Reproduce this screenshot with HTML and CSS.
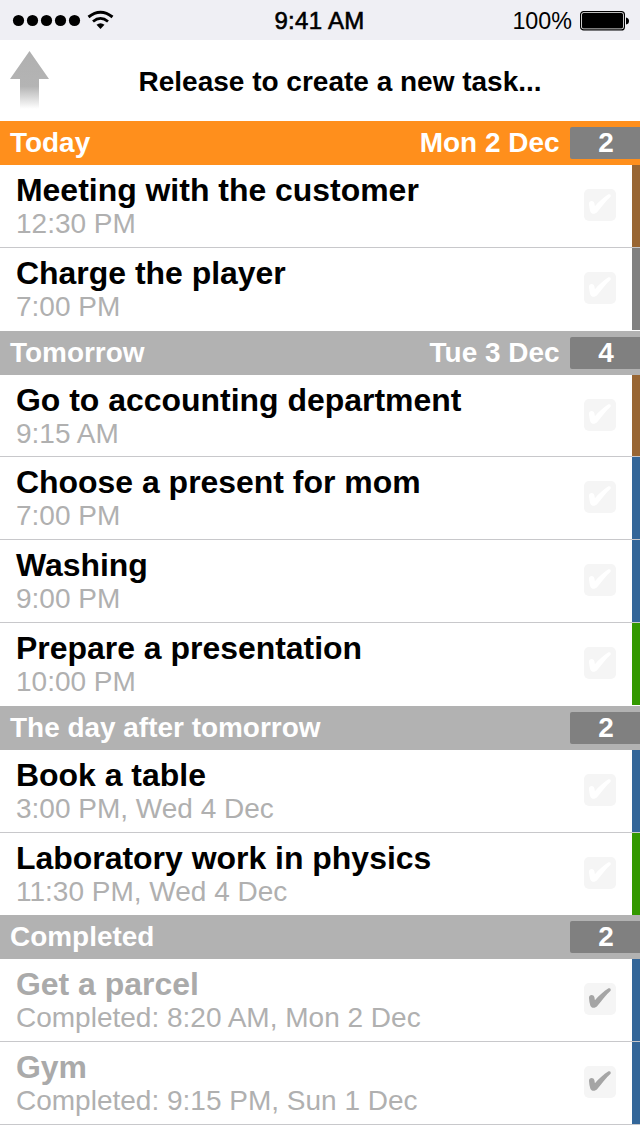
FILE: index.html
```html
<!DOCTYPE html>
<html lang="en">
<head>
<meta charset="utf-8">
<title>Tasks</title>
<link rel="stylesheet" href="styles.css">
</head>
<body>
<svg class="defs" width="0" height="0" aria-hidden="true">
  <symbol id="check" viewBox="0 0 32 32"><path d="M5 15C4.600 11.500 9.600 11 10.400 14.200L10.900 17.200C15 12.500 19.500 8.500 24.500 5.300Q27.300 4.500 26.600 7.800C22 12 18 17.500 13.500 22.800C11 25.600 7.500 25.600 6.300 22.500Q5.200 19 5 15Z"/></symbol>
</svg>
<header class="status">
  <div class="signal">
    <svg width="102" height="28" viewBox="0 0 102 28">
      <g><circle cx="6.500" cy="14.500" r="5.600"/><circle cx="20.500" cy="14.500" r="5.600"/><circle cx="34.500" cy="14.500" r="5.600"/><circle cx="48.500" cy="14.500" r="5.600"/><circle cx="62.500" cy="14.500" r="5.600"/></g>
      <g fill="none" stroke="#000"><path stroke-width="2.900" d="M76.500 11Q88.500 1.300 100.500 11"/><path stroke-width="2.800" d="M81 15.500Q88.500 9.300 96 15.500"/></g>
      <path d="M84.500 18.700Q88.500 15.600 92.500 18.700L88.500 23Z"/>
    </svg>
  </div>
  <div class="clock">9:41 AM</div>
  <div class="power"><span class="percent">100%</span>
    <svg width="50" height="20" viewBox="0 0 50 20"><rect x=".6" y=".6" width="43.800" height="18.300" rx="3" fill="#fff" stroke="#000" stroke-width="1.200"/><rect x="2" y="2" width="41" height="15.500" rx="1.500"/><path d="M46 6.500Q49 7 49 10T46 13.500Z"/></svg>
  </div>
</header>
<section class="pull">
  <svg class="arrow" width="40" height="60" viewBox="0 0 40 60"><defs><linearGradient id="fade" x2="0" y2="1"><stop offset="0" stop-color="#b0b0b0"/><stop offset=".6" stop-color="#b4b4b4"/><stop offset=".98" stop-color="#fff"/></linearGradient></defs><path fill="url(#fade)" d="M19.500 0L39 28H29V59H10V28H0Z"/></svg>
  <p>Release to create a new task...</p>
</section>
<main>
  <h2 class="group today"><span>Today</span><span class="date">Mon 2 Dec</span><b class="count">2</b></h2>
  <article class="task brown"><div class="info"><h3>Meeting with the customer</h3><p>12:30 PM</p></div><svg class="box"><use href="#check"/></svg></article>
  <article class="task grey last"><div class="info"><h3>Charge the player</h3><p>7:00 PM</p></div><svg class="box"><use href="#check"/></svg></article>

  <h2 class="group"><span>Tomorrow</span><span class="date">Tue 3 Dec</span><b class="count">4</b></h2>
  <article class="task brown short"><div class="info"><h3>Go to accounting department</h3><p>9:15 AM</p></div><svg class="box"><use href="#check"/></svg></article>
  <article class="task blue"><div class="info"><h3>Choose a present for mom</h3><p>7:00 PM</p></div><svg class="box"><use href="#check"/></svg></article>
  <article class="task blue"><div class="info"><h3>Washing</h3><p>9:00 PM</p></div><svg class="box"><use href="#check"/></svg></article>
  <article class="task green last"><div class="info"><h3>Prepare a presentation</h3><p>10:00 PM</p></div><svg class="box"><use href="#check"/></svg></article>

  <h2 class="group"><span>The day after tomorrow</span><b class="count">2</b></h2>
  <article class="task blue"><div class="info"><h3>Book a table</h3><p>3:00 PM, Wed 4 Dec</p></div><svg class="box"><use href="#check"/></svg></article>
  <article class="task green flush"><div class="info"><h3>Laboratory work in physics</h3><p>11:30 PM, Wed 4 Dec</p></div><svg class="box"><use href="#check"/></svg></article>

  <h2 class="group"><span>Completed</span><b class="count">2</b></h2>
  <article class="task blue done"><div class="info"><h3>Get a parcel</h3><p>Completed: 8:20 AM, Mon 2 Dec</p></div><svg class="box"><use href="#check"/></svg></article>
  <article class="task blue done"><div class="info"><h3>Gym</h3><p>Completed: 9:15 PM, Sun 1 Dec</p></div><svg class="box"><use href="#check"/></svg></article>
</main>
</body>
</html>
```
FILE: styles.css
```css
* { box-sizing: border-box; }
body, h2, h3, p { margin: 0; }
body {
  width: 640px;
  height: 1136px;
  overflow: hidden;
  background: #fff;
  color: #000;
  font-family: "Liberation Sans", Arial, sans-serif;
}
svg { display: block; flex: none; }
.defs { position: absolute; }

.status {
  display: grid;
  grid-template-columns: 1fr auto 1fr;
  align-items: center;
  height: 40px;
  padding: 2px 10px 0 12px;
  background: #efeff4;
  line-height: 38px;
}
.clock { padding-right: 3px; font-size: 24px; letter-spacing: .3px; -webkit-text-stroke: .6px #000; }
.signal { padding-bottom: 2px; }
.power { display: flex; justify-content: flex-end; align-items: center; gap: 8px; }
.percent { font-size: 23.300px; }

.pull {
  display: flex;
  height: 81px;
  padding: 11px 0 0 10px;
}
.pull p {
  margin-left: 88.500px;
  font-size: 28px;
  font-weight: bold;
  line-height: 61px;
}

.group {
  display: flex;
  align-items: center;
  height: 44px;
  padding-left: 10px;
  background: #b2b2b2;
  color: #fff;
  font-size: 27.950px;
  line-height: 44px;
}
.group.today { background: #ff8f1c; }
.date { margin-left: auto; }
.count {
  width: 70px;
  height: 32px;
  margin-left: auto;
  padding-left: 2px;
  border-radius: 2px 0 0 2px;
  background: #808080;
  line-height: 32px;
  text-align: center;
}
.date + .count { margin-left: 10.500px; }

.task {
  display: flex;
  height: 83px;
  padding-left: 16px;
  border-bottom: 1px solid #c8c8cb;
}
.task::after { content: ""; width: 8px; background: var(--tag); }
.task.last { border-color: #fff; }
.task.short { height: 82px; }
.task.flush { height: 82px; border: 0; }
.brown { --tag: #996633; }
.grey { --tag: #808080; }
.blue { --tag: #336699; }
.green { --tag: #339900; }
.info { flex: 1; padding-top: 7px; }
.info h3 { font-size: 31.950px; line-height: 36px; white-space: nowrap; }
.info p { color: #b0b0b0; font-size: 28px; line-height: 32px; }
.box {
  width: 32px;
  height: 32px;
  margin: 24px 16px 0 0;
  border-radius: 5px;
  background: #f5f5f5;
  fill: #fff;
}
.done h3 { color: #aaa; }
.done .box { fill: #a5a5a5; }
```
